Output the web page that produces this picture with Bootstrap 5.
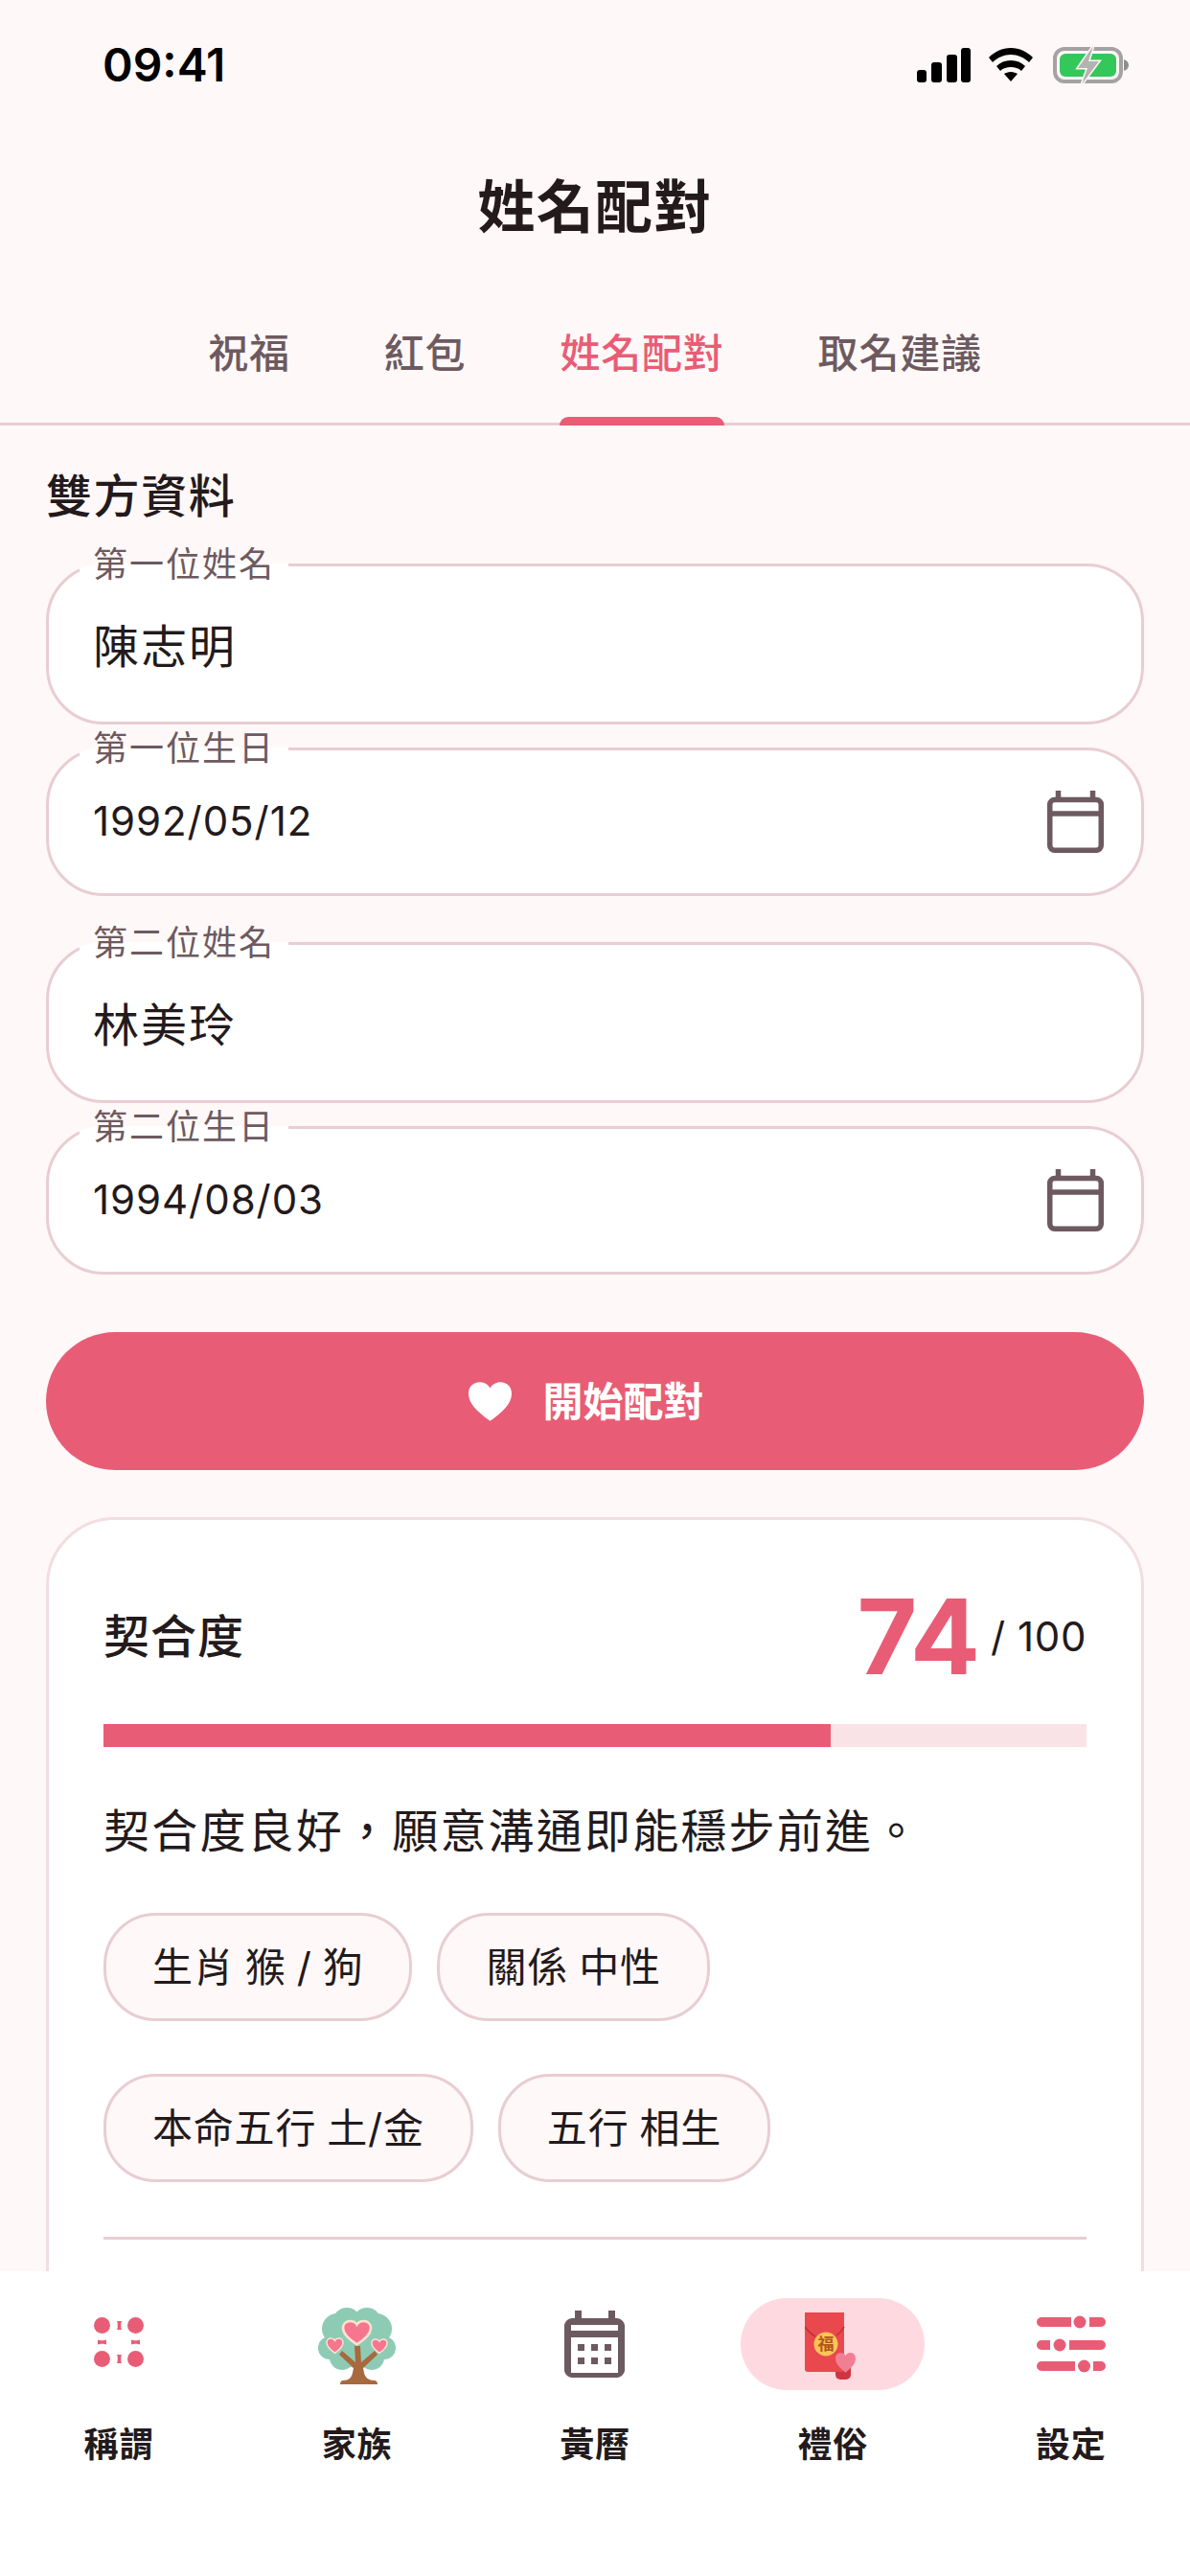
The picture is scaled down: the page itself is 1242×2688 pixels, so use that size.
<!DOCTYPE html>
<html lang="zh-Hant">
<head>
  <meta charset="UTF-8">
  <meta name="viewport" content="width=device-width, initial-scale=1">
  <title>姓名配對</title>
  <link href="https://cdn.jsdelivr.net/npm/bootstrap@5.3.0/dist/css/bootstrap.min.css" rel="stylesheet">
  <style>
    body {
      font-family: Inter, "Noto Sans CJK TC", sans-serif;
      background: #fff8f8;
      color: #231a1c;
      width: 1242px;
      height: 2688px;
      overflow: hidden;
    }
    .app-shell { width: 1242px; height: 2688px; }
    .scroll-area { height: 2370px; overflow: hidden; }

    .status-row { height: 136px; padding: 0 63px 0 107px; }
    .status-time { font-size: 48px; font-weight: 600; color: #000; line-height: 1; }

    .page-title { font-size: 60px; font-weight: 700; line-height: 80px; margin: 40px 0 0; text-align: center; letter-spacing: 1.2px; }

    .tab-row { height: 172px; margin-top: 16px; border-bottom: 3px solid #e8cdd3; gap: 98px; padding-top: 66px; }
    .tab-item { font-size: 42px; font-weight: 500; color: #6d5a60; line-height: 62px; letter-spacing: .8px; position: relative; height: 103px; text-decoration: none; }
    .tab-item.is-active { color: #e85d75; }
    .tab-item.is-active::after { content: ""; position: absolute; left: 0; right: 0; bottom: -3px; height: 9px; background: #e85d75; border-radius: 9px 9px 0 0; }

    .form-area { padding: 0 48px; }
    .section-title { font-size: 48px; font-weight: 500; line-height: 66px; margin: 41px 0 0; letter-spacing: 1.6px; }

    .pair-field { border: 3px solid #e8cdd3; border-radius: 60px; background: #fff; padding: 0 39px 0 46px; margin: 0; }
    .pair-field legend { float: none; width: auto; font-size: 36px; line-height: 42px; color: #6d5a60; padding: 0 14px; margin: 0 0 0 -14px; letter-spacing: 2px; }
    .pair-field input { border: 0; background: transparent; padding: 0; border-radius: 0; color: #231a1c; box-shadow: none; }
    .name-field { height: 188px; }
    .first-field { margin-top: 17px; }
    .next-pair { margin-top: 28px; }
    .name-field input { font-size: 48px; line-height: 60px; height: 60px; margin-top: 35px; letter-spacing: 2px; }
    .date-field { height: 175px; margin-top: 4px; }
    .date-field input { font-size: 42px; line-height: 56px; height: 56px; letter-spacing: .95px; }
    .date-body { height: 88px; margin-top: 11px; }

    .pair-btn { background: #e85d75; border: 0; border-radius: 72px; height: 144px; width: 100%; margin-top: 60px; padding-right: 30px; color: #fff; font-size: 42px; font-weight: 700; gap: 32px; }
    .pair-btn:hover, .pair-btn:active { background: #e85d75; color: #fff; }

    .result-box { border: 3px solid #f2dde1; border-radius: 72px; background: #fff; margin-top: 49px; padding: 57px 57px 200px; }
    .score-label { font-size: 48px; font-weight: 500; line-height: 66px; letter-spacing: 1px; }
    .score-num { font-size: 108px; font-weight: 700; color: #e85d75; line-height: 130px; letter-spacing: -1px; }
    .score-max { font-size: 42px; line-height: 56px; margin-left: 12px; letter-spacing: .6px; }
    .score-head { height: 130px; }

    .score-track { height: 24px; background: #f9e3e6; border-radius: 0; margin-top: 26px; }
    .score-track .progress-bar { background: #e85d75; }

    .score-text { font-size: 48px; line-height: 66px; margin: 51px 0 0; letter-spacing: 2.200px; }
    .punct-mark { font-family: "Noto Sans CJK SC", sans-serif; }
    .tag-row { gap: 26px; margin-top: 52px; }
    .tag-row + .tag-row { margin-top: 55px; }
    .tag-chip { height: 113px; border: 3px solid #e8cdd3; border-radius: 54px; background: #fff8f8; padding: 0 48px; font-size: 42px; line-height: 56px; letter-spacing: .8px; word-spacing: -1.5px; }
    .result-line { height: 3px; background: #e8cdd3; margin-top: 57px; }

    .bottom-nav { height: 318px; background: #fff; padding-top: 28px; }
    .nav-cell { width: 248.4px; }
    .nav-icon { height: 96px; width: 192px; border-radius: 48px; }
    .nav-icon.is-active { background: #ffd9e0; }
    .nav-label { font-size: 36px; font-weight: 700; line-height: 50px; margin-top: 32px; letter-spacing: .8px; }
  </style>
</head>
<body>
  <div class="app-shell d-flex flex-column">
    <div class="scroll-area">

      <!-- Status bar -->
      <div class="status-row d-flex justify-content-between align-items-center">
        <span class="status-time">09:41</span>
        <svg width="222" height="40" viewBox="0 0 222 40">
          <rect x="0" y="25" width="10" height="13" rx="3"/>
          <rect x="15" y="17" width="11" height="21" rx="3"/>
          <rect x="31" y="9" width="11" height="29" rx="3"/>
          <rect x="46" y="2" width="10" height="36" rx="3"/>
          <path d="M98 4c9 0 17 4 23 10l-4 5c-5-5-12-8-19-8s-14 3-19 8l-4-5C81 8 89 4 98 4z" transform="translate(0 -2)"/>
          <path d="M98 15c6 0 11 2 15 6l-4 5c-3-3-7-4-11-4s-8 1-11 4l-4-5c4-4 9-6 15-6z"/>
          <path d="M98 27c3 0 5 1 7 2l-7 8-7-8c2-1 4-2 7-2z"/>
          <rect x="144" y="3" width="69" height="34" rx="10" fill="none" stroke="#a5a2a2" stroke-width="4"/>
          <rect x="149" y="8" width="59" height="24" rx="6" fill="#34c759"/>
          <path d="M216 14c3 1 5 3 5 6s-2 5-5 6z" fill="#8e8c8c"/>
          <path d="M184 0l-16 23h10l-6 17 18-24h-11z" fill="#b5b2b1" stroke="#fff8f8" stroke-width="3" paint-order="stroke"/>
        </svg>
      </div>

      <h1 class="page-title">姓名配對</h1>

      <!-- Tabs -->
      <div class="tab-row d-flex justify-content-center">
        <a class="tab-item" href="#">祝福</a>
        <a class="tab-item" href="#">紅包</a>
        <a class="tab-item is-active" href="#">姓名配對</a>
        <a class="tab-item" href="#">取名建議</a>
      </div>

      <div class="form-area">
        <h2 class="section-title">雙方資料</h2>

        <fieldset class="pair-field name-field first-field">
          <legend>第一位姓名</legend>
          <input class="form-control" type="text" value="陳志明">
        </fieldset>

        <fieldset class="pair-field date-field">
          <legend>第一位生日</legend>
          <div class="date-body d-flex align-items-center">
            <input class="form-control" type="text" value="1992/05/12">
            <svg class="flex-shrink-0" width="59" height="65" viewBox="0 0 59 65" fill="none" stroke="#6d5a60" stroke-width="5.500">
              <rect x="2.750" y="9.500" width="53.500" height="52.750" rx="5"/>
              <path d="M2.500 24h54"/>
              <path d="M11.500 0v9M47.500 0v9"/>
            </svg>
          </div>
        </fieldset>

        <fieldset class="pair-field name-field next-pair">
          <legend>第二位姓名</legend>
          <input class="form-control" type="text" value="林美玲">
        </fieldset>

        <fieldset class="pair-field date-field">
          <legend>第二位生日</legend>
          <div class="date-body d-flex align-items-center">
            <input class="form-control" type="text" value="1994/08/03">
            <svg class="flex-shrink-0" width="59" height="65" viewBox="0 0 59 65" fill="none" stroke="#6d5a60" stroke-width="5.500">
              <rect x="2.750" y="9.500" width="53.500" height="52.750" rx="5"/>
              <path d="M2.500 24h54"/>
              <path d="M11.500 0v9M47.500 0v9"/>
            </svg>
          </div>
        </fieldset>

        <button class="btn pair-btn d-flex align-items-center justify-content-center" type="button">
          <svg width="45" height="41" viewBox="0 0 100 90"><path d="M50 90C20 68 0 50 0 26 0 11 11 0 26 0c10 0 19 5 24 14C55 5 64 0 74 0c15 0 26 11 26 26 0 24-20 42-50 64z" fill="#fff"/></svg>
          <span>開始配對</span>
        </button>

        <!-- Result card -->
        <div class="result-box">
          <div class="score-head d-flex justify-content-between align-items-center">
            <span class="score-label">契合度</span>
            <div class="d-flex align-items-center">
              <span class="score-num">74</span>
              <span class="score-max">/ 100</span>
            </div>
          </div>
          <div class="progress score-track" role="progressbar" aria-valuenow="74" aria-valuemin="0" aria-valuemax="100">
            <div class="progress-bar" style="width:74%"></div>
          </div>
          <p class="score-text">契合度良好<span class="punct-mark">，</span>願意溝通即能穩步前進<span class="punct-mark">。</span></p>
          <div class="tag-row d-flex">
            <span class="tag-chip d-inline-flex align-items-center">生肖 猴 / 狗</span>
            <span class="tag-chip d-inline-flex align-items-center">關係 中性</span>
          </div>
          <div class="tag-row d-flex">
            <span class="tag-chip d-inline-flex align-items-center">本命五行 土/金</span>
            <span class="tag-chip d-inline-flex align-items-center">五行 相生</span>
          </div>
          <div class="result-line"></div>
        </div>
      </div>
    </div>

    <!-- Bottom navigation -->
    <nav class="bottom-nav d-flex">
      <div class="nav-cell d-flex flex-column align-items-center">
        <div class="nav-icon d-flex align-items-center justify-content-center">
          <svg width="52" height="56" viewBox="0 0 52 56" fill="#e85d75">
            <circle cx="8.500" cy="8.500" r="8.500"/><circle cx="43.500" cy="8.500" r="8.500"/>
            <circle cx="8.500" cy="43.500" r="8.500"/><circle cx="43.500" cy="43.500" r="8.500"/>
            <path d="M24 4h5l-.7 2v5l.7 2h-5l.7-2V6zM24 39h5l-.7 2v5l.7 2h-5l.7-2v-5zM4 23.500l3 .7h3l3-.7v5l-3-.7H7l-3 .7zM39 23.500l3 .7h3l3-.7v5l-3-.7h-3l-3 .7z"/>
          </svg>
        </div>
        <span class="nav-label">稱謂</span>
      </div>

      <div class="nav-cell d-flex flex-column align-items-center">
        <div class="nav-icon d-flex align-items-center justify-content-center">
          <svg width="82" height="84" viewBox="0 -4 82 84">
            <g fill="#8ecbb5">
              <circle cx="30" cy="15" r="15"/><circle cx="51" cy="15" r="15"/>
              <circle cx="20" cy="22" r="16"/><circle cx="61" cy="22" r="16"/>
              <circle cx="12" cy="42" r="12"/><circle cx="69" cy="42" r="12"/>
              <circle cx="25" cy="52" r="13"/><circle cx="56" cy="52" r="13"/>
              <circle cx="41" cy="35" r="28"/>
            </g>
            <path d="M38 40h6l1 17 14-12 3 4-15 14 1 5c1 5 5 8 11 8 2 0 3 2 3 4H23c0-2 1-4 3-4 6 0 9-3 10-8l1-5-15-14 3-4 14 12z" fill="#a8693f"/>
            <g fill="#f6758f" stroke="#fce4d0" stroke-width="9">
              <path transform="translate(26 14) scale(.29 .27)" d="M50 90C20 68 0 50 0 26 0 11 11 0 26 0c10 0 19 5 24 14C55 5 64 0 74 0c15 0 26 11 26 26 0 24-20 42-50 64z"/>
              <path transform="translate(9 32) scale(.17 .17)" d="M50 90C20 68 0 50 0 26 0 11 11 0 26 0c10 0 19 5 24 14C55 5 64 0 74 0c15 0 26 11 26 26 0 24-20 42-50 64z"/>
              <path transform="translate(56 33) scale(.16 .16)" d="M50 90C20 68 0 50 0 26 0 11 11 0 26 0c10 0 19 5 24 14C55 5 64 0 74 0c15 0 26 11 26 26 0 24-20 42-50 64z"/>
            </g>
          </svg>
        </div>
        <span class="nav-label">家族</span>
      </div>

      <div class="nav-cell d-flex flex-column align-items-center">
        <div class="nav-icon d-flex align-items-center justify-content-center">
          <svg width="63" height="70" viewBox="0 0 63 70" fill="#6d5a60">
            <path fill-rule="evenodd" d="M11 0h7v8h28V0h7v8h2c4 0 8 4 8 8v46c0 4-4 8-8 8H8c-4 0-8-4-8-8V16c0-4 4-8 8-8h3zM7 15v6h49v-6zM7 28v37h49V28z"/>
            <rect x="14" y="35" width="7" height="7"/><rect x="28" y="35" width="7" height="7"/><rect x="42" y="35" width="7" height="7"/>
            <rect x="14" y="49" width="7" height="7"/><rect x="28" y="49" width="7" height="7"/><rect x="42" y="49" width="7" height="7"/>
          </svg>
        </div>
        <span class="nav-label">黃曆</span>
      </div>

      <div class="nav-cell d-flex flex-column align-items-center">
        <div class="nav-icon is-active d-flex align-items-center justify-content-center">
          <svg width="59" height="78" viewBox="0 -6 59 78">
            <rect x="32" y="50" width="16" height="20" rx="5" fill="#cf3540"/>
            <path d="M0 0h41v59c0 2-1 3-3 3H3c-2 0-3-1-3-3z" fill="#e8484e"/>
            <path d="M0 15c3 4 7 8 11 10M41 15c-2 4-5 7-8 9" stroke="#b92f38" stroke-width="1.500" fill="none"/>
            <circle cx="22" cy="33" r="12.500" fill="#fbc457"/>
            <text x="22" y="39" font-size="17" font-weight="700" text-anchor="middle" fill="#b4561a" font-family="Noto Sans CJK TC">福</text>
            <path transform="translate(32 42) scale(.21 .23)" d="M50 90C20 68 0 50 0 26 0 11 11 0 26 0c10 0 19 5 24 14C55 5 64 0 74 0c15 0 26 11 26 26 0 24-20 42-50 64z" fill="#f17f94"/>
          </svg>
        </div>
        <span class="nav-label">禮俗</span>
      </div>

      <div class="nav-cell d-flex flex-column align-items-center">
        <div class="nav-icon d-flex align-items-center justify-content-center">
          <svg width="72" height="60" viewBox="0 0 72 60" fill="#e85d75">
            <path d="M5 2h31v10H5a5 5 0 0 1 0-10zM55 2h12a5 5 0 0 1 0 10H55z"/><circle cx="45" cy="7" r="6.500"/>
            <path d="M5 26h9v10H5a5 5 0 0 1 0-10zM34 26h33a5 5 0 0 1 0 10H34z"/><circle cx="24" cy="31" r="6.500"/>
            <path d="M5 48h35v10H5a5 5 0 0 1 0-10zM59 48h8a5 5 0 0 1 0 10h-8z"/><circle cx="49.500" cy="53" r="6.500"/>
          </svg>
        </div>
        <span class="nav-label">設定</span>
      </div>
    </nav>
  </div>

  <script src="https://cdn.jsdelivr.net/npm/bootstrap@5.3.0/dist/js/bootstrap.bundle.min.js"></script>
</body>
</html>
